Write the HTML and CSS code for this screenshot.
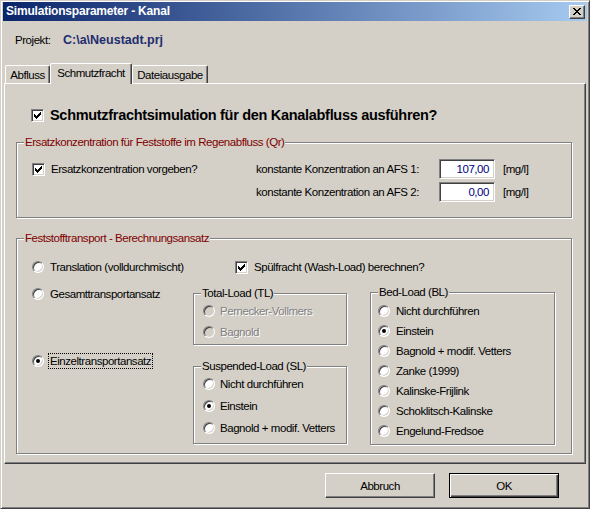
FILE: index.html
```html
<!DOCTYPE html>
<html>
<head>
<meta charset="utf-8">
<link rel="stylesheet" href="styles.css">
</head>
<body>
<div class="window">
  <div class="titlebar">
    <span class="title">Simulationsparameter - Kanal</span>
    <span class="close"><svg width="8" height="7" viewBox="0 0 8 7" shape-rendering="crispEdges"><g fill="#000"><rect x="0" y="0" width="2" height="1"/><rect x="6" y="0" width="2" height="1"/><rect x="1" y="1" width="2" height="1"/><rect x="5" y="1" width="2" height="1"/><rect x="2" y="2" width="4" height="1"/><rect x="3" y="3" width="2" height="1"/><rect x="2" y="4" width="4" height="1"/><rect x="1" y="5" width="2" height="1"/><rect x="5" y="5" width="2" height="1"/><rect x="0" y="6" width="2" height="1"/><rect x="6" y="6" width="2" height="1"/></g></svg></span>
  </div>
  <div class="content">
    <div class="projekt"><span class="plabel">Projekt:</span><span class="path">C:\a\Neustadt.prj</span></div>
    <div class="tabs">
      <div class="tab t1">Abfluss</div>
      <div class="tab t2 active">Schmutzfracht</div>
      <div class="tab t3">Dateiausgabe</div>
    </div>
    <div class="panel">
      <div class="main-check">
        <span class="cb"><svg width="7" height="7" viewBox="0 0 7 7" shape-rendering="crispEdges"><g fill="#000"><rect x="0" y="2" width="1" height="3"/><rect x="1" y="3" width="1" height="3"/><rect x="2" y="4" width="1" height="3"/><rect x="3" y="3" width="1" height="3"/><rect x="4" y="2" width="1" height="3"/><rect x="5" y="1" width="1" height="3"/><rect x="6" y="0" width="1" height="3"/></g></svg></span>
        <span class="main-label">Schmutzfrachtsimulation für den Kanalabfluss ausführen?</span>
      </div>

      <div class="group g1">
        <span class="legend red">Ersatzkonzentration für Feststoffe im Regenabfluss (Qr)</span>
        <div class="g1-left">
          <div class="opt">
            <span class="cb"><svg width="7" height="7" viewBox="0 0 7 7" shape-rendering="crispEdges"><g fill="#000"><rect x="0" y="2" width="1" height="3"/><rect x="1" y="3" width="1" height="3"/><rect x="2" y="4" width="1" height="3"/><rect x="3" y="3" width="1" height="3"/><rect x="4" y="2" width="1" height="3"/><rect x="5" y="1" width="1" height="3"/><rect x="6" y="0" width="1" height="3"/></g></svg></span>
            <span>Ersatzkonzentration vorgeben?</span>
          </div>
        </div>
        <div class="conc-grid">
          <span>konstante Konzentration an AFS 1:</span><span class="field">107,00</span><span class="unit">[mg/l]</span>
          <span>konstante Konzentration an AFS 2:</span><span class="field">0,00</span><span class="unit">[mg/l]</span>
        </div>
      </div>

      <div class="group g2">
        <span class="legend red">Feststofftransport - Berechnungsansatz</span>
        <div class="g2-top">
          <div class="col1">
            <div class="opt"><span class="rb"></span><span>Translation (volldurchmischt)</span></div>
          </div>
          <div class="wash">
            <div class="opt">
              <span class="cb"><svg width="7" height="7" viewBox="0 0 7 7" shape-rendering="crispEdges"><g fill="#000"><rect x="0" y="2" width="1" height="3"/><rect x="1" y="3" width="1" height="3"/><rect x="2" y="4" width="1" height="3"/><rect x="3" y="3" width="1" height="3"/><rect x="4" y="2" width="1" height="3"/><rect x="5" y="1" width="1" height="3"/><rect x="6" y="0" width="1" height="3"/></g></svg></span>
              <span>Spülfracht (Wash-Load) berechnen?</span>
            </div>
          </div>
        </div>
        <div class="g2-bottom">
          <div class="col1">
            <div class="opt gesamt"><span class="rb"></span><span>Gesamttransportansatz</span></div>
            <div class="opt einzel"><span class="rb on"></span><span class="focus">Einzeltransportansatz</span></div>
          </div>
          <div class="col2">
            <div class="group sub tl">
              <span class="legend">Total-Load (TL)</span>
              <div class="opt disabled"><span class="rb dis"></span><span>Pernecker-Vollmers</span></div>
              <div class="opt disabled"><span class="rb dis"></span><span>Bagnold</span></div>
            </div>
            <div class="group sub sl">
              <span class="legend">Suspended-Load (SL)</span>
              <div class="opt"><span class="rb"></span><span>Nicht durchführen</span></div>
              <div class="opt"><span class="rb on"></span><span>Einstein</span></div>
              <div class="opt"><span class="rb"></span><span>Bagnold + modif. Vetters</span></div>
            </div>
          </div>
          <div class="col3">
            <div class="group sub bl">
              <span class="legend">Bed-Load (BL)</span>
              <div class="opt"><span class="rb"></span><span>Nicht durchführen</span></div>
              <div class="opt"><span class="rb on"></span><span>Einstein</span></div>
              <div class="opt"><span class="rb"></span><span>Bagnold + modif. Vetters</span></div>
              <div class="opt"><span class="rb"></span><span>Zanke (1999)</span></div>
              <div class="opt"><span class="rb"></span><span>Kalinske-Frijlink</span></div>
              <div class="opt"><span class="rb"></span><span>Schoklitsch-Kalinske</span></div>
              <div class="opt"><span class="rb"></span><span>Engelund-Fredsoe</span></div>
            </div>
          </div>
        </div>
      </div>
    </div>
    <div class="buttons">
      <div class="btn">Abbruch</div>
      <div class="btn default">OK</div>
    </div>
  </div>
</div>
</body>
</html>
```

FILE: styles.css
```css
html, body {
  margin: 0;
  padding: 0;
  background: #d4d0c8;
}
body {
  font-family: "Liberation Sans", Arial, sans-serif;
  font-size: 11.5px;
  letter-spacing: -0.45px;
  color: #000;
}
.window {
  width: 590px;
  height: 509px;
  box-sizing: border-box;
  background: #d4d0c8;
  border: 1px solid;
  border-color: #d4d0c8 #404040 #404040 #d4d0c8;
  box-shadow: inset 1px 1px #fff, inset -1px -1px #808080;
  padding: 1px 2px 2px 2px;
  overflow: hidden;
}
.titlebar {
  height: 19px;
  display: flex;
  align-items: center;
  justify-content: space-between;
  background: linear-gradient(to right, #0a246a, #a6caf0);
  padding: 0 2px 0 3px;
}
.title {
  color: #fff;
  font-weight: bold;
  font-size: 12px;
  letter-spacing: -0.2px;
  line-height: 19px;
}
.close {
  width: 16px;
  height: 14px;
  box-sizing: border-box;
  background: #d4d0c8;
  border: 1px solid;
  border-color: #fff #404040 #404040 #fff;
  box-shadow: inset -1px -1px #808080;
  display: flex;
  align-items: center;
  justify-content: center;
}
.close svg { display: block; margin-left: -1px; }

.projekt {
  margin-top: 12px;
  height: 14px;
  display: flex;
  align-items: center;
  padding-left: 12px;
}
.plabel { width: 48px; }
.path {
  font-weight: bold;
  font-size: 12.5px;
  letter-spacing: 0;
  color: #1f2d6e;
}

.tabs {
  margin-top: 16px;
  height: 20px;
  display: flex;
  align-items: flex-end;
  padding-left: 2px;
  position: relative;
  z-index: 2;
}
.tab {
  height: 18px;
  box-sizing: border-box;
  background: #d4d0c8;
  border-top: 1px solid #fff;
  border-left: 1px solid #fff;
  border-right: 1px solid #404040;
  box-shadow: inset -1px 0 #808080;
  border-radius: 2px 2px 0 0;
  padding-top: 3px;
  line-height: 13px;
  text-align: center;
}
.t1 { width: 45px; }
.t2 { width: 82px; }
.t3 { width: 76px; }
.tab.active {
  height: 21px;
  margin-bottom: -1px;
  padding-top: 3px;
}

.panel {
  margin: 0 1px;
  height: 381px;
  box-sizing: border-box;
  border: 1px solid;
  border-color: #fff #404040 #404040 #fff;
  box-shadow: inset -1px -1px #808080;
  position: relative;
  z-index: 1;
}

.cb {
  width: 13px;
  height: 13px;
  box-sizing: border-box;
  flex: none;
  background: #fff;
  border: 1px solid;
  border-color: #808080 #fff #fff #808080;
  box-shadow: inset 1px 1px #404040, inset -1px -1px #d4d0c8;
  display: flex;
  align-items: center;
  justify-content: center;
}
.cb svg { display: block; }
.rb {
  width: 12px;
  height: 12px;
  box-sizing: border-box;
  flex: none;
  border-radius: 50%;
  background: #fff;
  border: 1px solid;
  border-color: #808080 #fff #fff #808080;
  box-shadow: inset 1px 1px #404040, inset -1px -1px #d4d0c8;
  position: relative;
}
.rb.on::after {
  content: "";
  position: absolute;
  left: 3px;
  top: 3px;
  width: 4px;
  height: 4px;
  border-radius: 50%;
  background: #000;
}
.rb.dis { background: #d4d0c8; }

.opt {
  display: flex;
  align-items: center;
  gap: 6px;
  height: 14px;
  line-height: 14px;
  white-space: nowrap;
}
.disabled {
  color: #808080;
  text-shadow: 1px 1px 0 #fff;
}

.main-check {
  margin-top: 24px;
  padding-left: 26px;
  height: 14px;
  display: flex;
  align-items: center;
  gap: 6px;
}
.main-label {
  font-weight: bold;
  font-size: 14.5px;
  letter-spacing: -0.3px;
  line-height: 14px;
  white-space: nowrap;
}

.group {
  position: relative;
  box-sizing: border-box;
  border: 1px solid #808080;
  box-shadow: inset 1px 1px #fff, 1px 1px #fff;
}
.legend {
  position: absolute;
  top: -8px;
  left: 7px;
  padding: 0 1px;
  background: #d4d0c8;
  line-height: 14px;
  white-space: nowrap;
}
.red { color: #800000; }

.g1 {
  margin-top: 20px;
  margin-left: 11px;
  width: 556px;
  height: 76px;
  padding-top: 16px;
  display: flex;
  align-items: flex-start;
}
.g1-left {
  width: 239px;
  box-sizing: border-box;
  padding-left: 15px;
  height: 20px;
  display: flex;
  align-items: center;
}
.conc-grid {
  display: grid;
  grid-template-columns: 183px 56px auto;
  grid-auto-rows: 20px;
  row-gap: 3px;
  align-items: center;
  white-space: nowrap;
}
.field {
  height: 20px;
  box-sizing: border-box;
  background: #fff;
  border: 1px solid;
  border-color: #808080 #fff #fff #808080;
  box-shadow: inset 1px 1px #404040, inset -1px -1px #d4d0c8;
  text-align: right;
  padding-right: 5px;
  line-height: 18px;
  color: #000080;
}
.unit { margin-left: 8px; }

.g2 {
  margin-top: 20px;
  margin-left: 11px;
  width: 556px;
  height: 216px;
  padding-top: 21px;
}
.g2-top {
  display: flex;
  height: 14px;
}
.col1 {
  width: 176px;
  box-sizing: border-box;
  padding-left: 15px;
  flex: none;
}
.wash { padding-left: 42px; }
.g2-bottom {
  display: flex;
  align-items: flex-start;
  margin-top: 12px;
}
.gesamt { margin-top: 1px; }
.einzel {
  margin-top: 52px;
  height: 16px;
  gap: 4px;
}
.focus {
  border: 1px dotted #000;
  padding: 0 1px;
  line-height: 14px;
}
.col2 {
  width: 154px;
  flex: none;
}
.col3 {
  margin-left: 23px;
  flex: none;
}
.sub {
  display: flex;
  flex-direction: column;
}
.tl {
  margin-top: 7px;
  height: 52px;
  padding: 10px 0 0 9px;
  gap: 7px;
}
.sl {
  margin-top: 21px;
  height: 78px;
  padding: 10px 0 0 9px;
  gap: 8px;
}
.bl {
  margin-top: 6px;
  width: 185px;
  height: 153px;
  padding: 11px 0 0 7px;
  gap: 6px;
}
.tl .opt, .sl .opt { gap: 5px; }

.buttons {
  margin-top: 9px;
  display: flex;
  justify-content: flex-end;
  gap: 14px;
  padding-right: 28px;
}
.btn {
  width: 110px;
  height: 25px;
  box-sizing: border-box;
  border: 1px solid;
  border-color: #fff #404040 #404040 #fff;
  box-shadow: inset -1px -1px #808080;
  display: flex;
  align-items: center;
  justify-content: center;
}
.btn.default {
  border-color: #000;
  box-shadow: inset 1px 1px #fff, inset -1px -1px #404040, inset -2px -2px #808080;
}
```
